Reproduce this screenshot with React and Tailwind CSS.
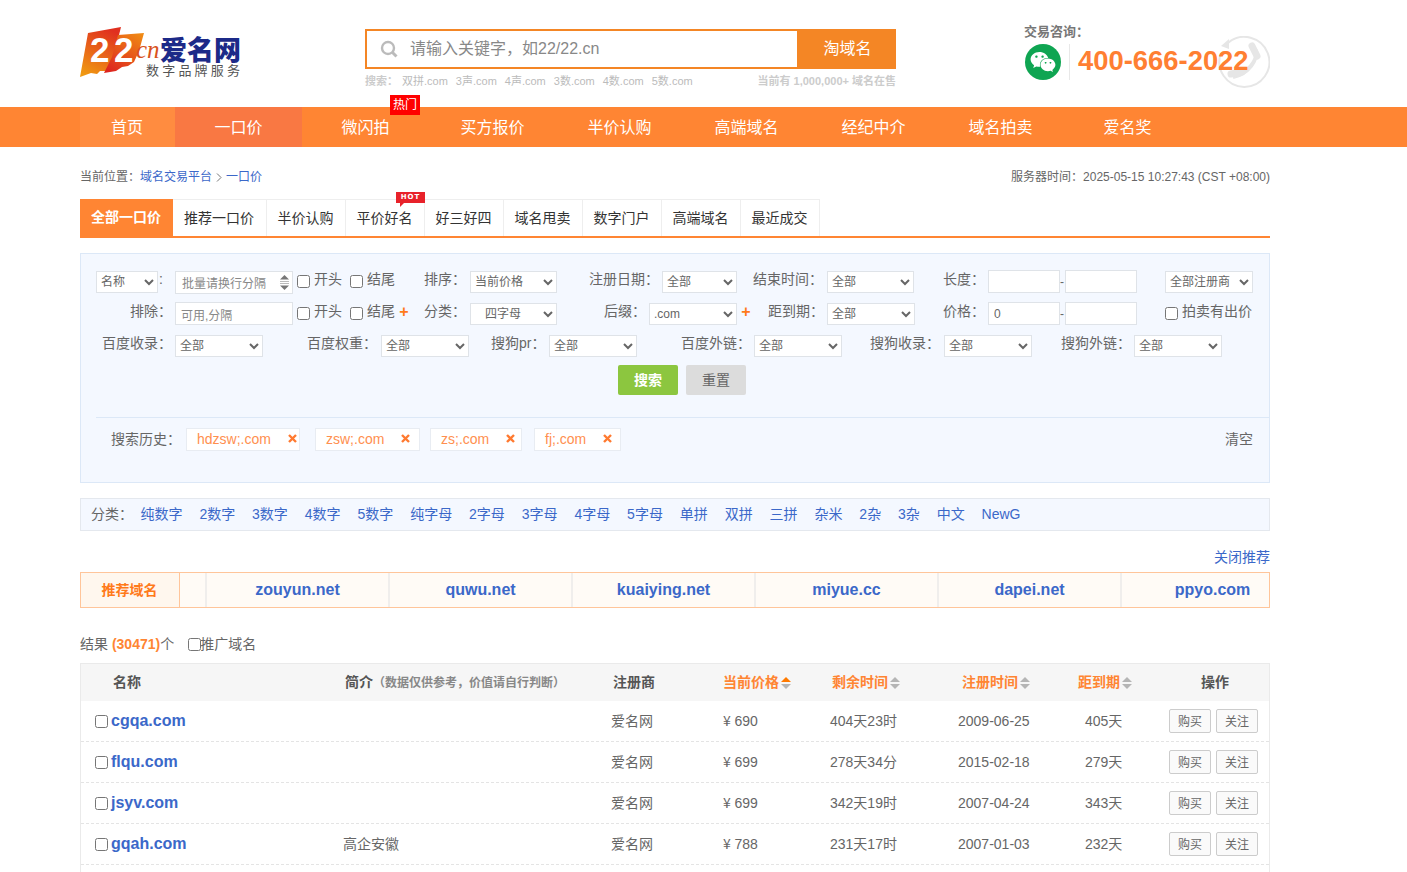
import React from "react";
import { FaWeixin } from "react-icons/fa";

const link = "text-[#3b68c9]";

function Logo() {
  return (
    <svg width="164" height="54" viewBox="0 0 164 54" className="block">
      <defs>
        <linearGradient id="g1" x1="0.2" y1="1" x2="0.6" y2="0">
          <stop offset="0" stopColor="#f09a12" />
          <stop offset="1" stopColor="#e0301f" />
        </linearGradient>
        <linearGradient id="g2" x1="0.2" y1="1" x2="0.9" y2="0">
          <stop offset="0" stopColor="#dd241f" />
          <stop offset="1" stopColor="#f08a14" />
        </linearGradient>
      </defs>
      <polygon points="0,50 8,6 41,0 38,12 32,38 27,44 20,44 17,47 11,46" fill="url(#g1)" />
      <polygon points="38,8 64,6 59,24 54,35 48,39 42,40 36,44 24,46 32,30" fill="url(#g2)" />
      <text x="10" y="35" fontSize="35" fontWeight="700" fill="#fff" fontFamily="'Liberation Sans',sans-serif">2</text>
      <text x="34" y="35" fontSize="35" fontWeight="700" fill="#fff" fontFamily="'Liberation Sans',sans-serif">2</text>
      <text x="56" y="31" fontSize="25" fontStyle="italic" fill="#d9531c" fontFamily="'Liberation Serif',serif">cn</text>
      <text x="80" y="33" fontSize="27" fontWeight="900" fill="#1c2a88" fontFamily="'Noto Sans CJK SC',sans-serif">爱名网</text>
      <text x="66" y="48" fontSize="13" letterSpacing="3.2" fill="#555" fontFamily="'Noto Sans CJK SC',sans-serif">数字品牌服务</text>
    </svg>
  );
}

function Sort({ active }) {
  return (
    <svg width="10" height="12" viewBox="0 0 10 12" className="ml-[2px] flex-none">
      <polygon points="5,0 10,5 0,5" fill={active ? "#ff7a00" : "#b5b5b5"} />
      <polygon points="0,7 10,7 5,12" fill="#b5b5b5" />
    </svg>
  );
}

function Sel({ cls, text }) {
  return (
    <select className={"flex-none h-[22px] bg-white border border-[#dfe3e8] text-[12px] text-[#666] " + cls}>
      <option>{text}</option>
    </select>
  );
}

function Lab({ cls, children }) {
  return <span className={"flex-none whitespace-nowrap mb-[5px] " + cls}>{children}</span>;
}

function Chk({ cls = "" }) {
  return <input type="checkbox" className={"flex-none w-[13px] h-[13px] bg-white " + cls} />;
}

function Inp({ cls, val, ph }) {
  return (
    <input
      defaultValue={val}
      placeholder={ph}
      className={"flex-none h-[23px] mb-[1px] bg-white border border-[#dfe3e8] text-[12px] text-[#666] px-[5px] placeholder:text-[#888] " + cls}
    />
  );
}

const Plus = ({ cls }) => <span className={"flex-none w-[10px] text-center font-bold text-[#ff7a1a] text-[16px] leading-none mb-[4px] " + cls}>+</span>;

const tabs = [
  ["推荐一口价", "w-[94px]"],
  ["半价认购", "w-[79px]"],
  ["平价好名", "w-[79px]"],
  ["好三好四", "w-[79px]"],
  ["域名甩卖", "w-[79px]"],
  ["数字门户", "w-[79px]"],
  ["高端域名", "w-[79px]"],
  ["最近成交", "w-[79px]"],
];

const cats = ["纯数字", "2数字", "3数字", "4数字", "5数字", "纯字母", "2字母", "3字母", "4字母", "5字母", "单拼", "双拼", "三拼", "杂米", "2杂", "3杂", "中文", "NewG"];
const rec = ["zouyun.net", "quwu.net", "kuaiying.net", "miyue.cc", "dapei.net", "ppyo.com"];
const rows = [
  ["cgqa.com", "", "690", "404天23时", "2009-06-25", "405天"],
  ["flqu.com", "", "699", "278天34分", "2015-02-18", "279天"],
  ["jsyv.com", "", "699", "342天19时", "2007-04-24", "343天"],
  ["gqah.com", "高企安徽", "788", "231天17时", "2007-01-03", "232天"],
];
const navs = ["微闪拍", "买方报价", "半价认购", "高端域名", "经纪中介", "域名拍卖", "爱名奖"];
const hints = ["双拼.com", "3声.com", "4声.com", "3数.com", "4数.com", "5数.com"];

function Tag({ text, cls }) {
  return (
    <span className={"flex-none h-[23px] flex items-center bg-white border border-[#e8ecf2] pl-[10px] text-[14px] text-[#ff8f4f] " + cls}>
      {text}
      <svg width="9" height="9" viewBox="0 0 9 9" className="ml-[17px] mb-[3px] flex-none">
        <path d="M1 1 L8 8 M8 1 L1 8" stroke="#ff7a30" strokeWidth="2.4" />
      </svg>
    </span>
  );
}

export default function App() {
  return (
    <div className="h-[872px] overflow-hidden bg-white text-[#666] text-[14px] font-['Liberation_Sans','Noto_Sans_CJK_SC',sans-serif]">
      {/* header */}
      <div className="h-[107px] pl-[80px] flex">
        <div className="w-[285px] flex-none pt-[27px]">
          <Logo />
        </div>
        <div className="w-[531px] flex-none pt-[29px]">
          <div className="h-[40px] flex border-2 border-[#f48625]">
            <div className="w-[43px] flex-none flex items-center justify-center">
              <svg width="18" height="18" viewBox="0 0 18 18">
                <circle cx="8" cy="8" r="6" fill="none" stroke="#bbb" strokeWidth="2.4" />
                <path d="M12.5 12.5 L16.5 16.5" stroke="#bbb" strokeWidth="3" />
              </svg>
            </div>
            <input placeholder="请输入关键字，如22/22.cn" className="flex-1 min-w-0 text-[16px] placeholder:text-[#888] outline-none" />
            <button className="w-[99px] pl-[2px] flex-none bg-[#f48625] text-white text-[16px] -my-[2px] -mr-[2px]">淘域名</button>
          </div>
          <div className="mt-[5px] flex text-[11px] text-[#ccc] font-bold leading-[14px]">
            <span className="w-[37px] flex-none">搜索：</span>
            <span className="flex gap-[8px]">
              {hints.map((h) => (
                <span key={h} className="font-normal text-[#bbb]">{h}</span>
              ))}
            </span>
            <span className="ml-auto">当前有 1,000,000+ 域名在售</span>
          </div>
        </div>
        <div className="relative ml-[128px] w-[246px] flex-none pt-[24px]">
          <svg width="52" height="52" viewBox="0 0 52 52" className="absolute left-[194px] top-[36px]">
            <path d="M10 7 A25 25 0 1 1 3 17" fill="none" stroke="#e6e6e6" strokeWidth="2" />
            <polygon points="3,10 11,3 11,13" fill="#e6e6e6" />
            <path d="M38 14 C40 24 30 38 15 41" fill="none" stroke="#e6e6e6" strokeWidth="4" />
            <path d="M34 10 L39 20" stroke="#e6e6e6" strokeWidth="7" strokeLinecap="round" />
            <path d="M13 38 L24 36" stroke="#e6e6e6" strokeWidth="7" strokeLinecap="round" />
          </svg>
          <div className="relative text-[13px] leading-[16px] font-bold text-[#777]">交易咨询：</div>
          <div className="relative mt-[4px] flex items-center">
            <span className="w-[36px] h-[36px] ml-[1px] rounded-full bg-[#0fa552] flex items-center justify-center text-white">
              <FaWeixin size={26} />
            </span>
            <span className="ml-[8px] w-px h-[36px] bg-[#e8e8e8]" />
            <span className="ml-[8px] text-[27.4px] leading-[34px] mb-[2px] font-bold text-[#ff7f32]">400-666-2022</span>
          </div>
        </div>
      </div>

      {/* nav */}
      <div className="h-[40px] bg-[#ff8533] pl-[80px] flex text-[16px] text-white">
        <div className="w-[95px] pt-[2px] pr-[1px] flex items-center justify-center bg-[#ff8c40]">首页</div>
        <div className="w-[127px] pt-[2px] flex items-center justify-center bg-[#f97843]">一口价</div>
        {navs.map((n, i) => (
          <div key={n} className="relative w-[127px] pt-[2px] flex items-center justify-center">
            {n}
            {i === 0 && (
              <span className="absolute left-[88px] -top-[12px] w-[30px] h-[20px] bg-[#ff0000] text-[12px] leading-[20px] text-center">热门</span>
            )}
          </div>
        ))}
      </div>

      <div className="ml-[80px] w-[1190px]">
        {/* breadcrumb */}
        <div className="h-[52px] pt-[22px] flex items-start justify-between text-[12px] leading-[16px]">
          <span className="flex items-center">
            当前位置：<span className={link}>域名交易平台</span>
            <svg width="6" height="9" viewBox="0 0 6 9" className="mx-[4px]">
              <path d="M1 0.5 L5 4.5 L1 8.5" fill="none" stroke="#777" strokeWidth="1" />
            </svg>
            <span className={link}>一口价</span>
          </span>
          <span>服务器时间：2025-05-15 10:27:43 (CST +08:00)</span>
        </div>

        {/* tabs */}
        <div className="h-[39px] flex border-b-2 border-[#ff8533] text-[14px] text-[#333]">
          <div className="w-[93px] pr-[1px] flex items-center justify-center bg-[#ff8533] text-white font-bold">全部一口价</div>
          {tabs.map(([t, w], i) => (
            <div key={t} className={"relative pr-[1px] flex items-center justify-center border-r border-t border-[#eee] " + w}>
              {t}
              {i === 2 && (
                <span className="absolute left-[50px] -top-[8px] w-[29px] h-[11px] bg-[#e8222a] text-white text-[7px] font-bold leading-[11px] text-center tracking-[1px] font-['DejaVu_Sans',sans-serif]">
                  HOT
                  <span className="absolute left-[4px] top-[11px] w-0 h-0 border-t-[4px] border-t-[#e8222a] border-r-[4px] border-r-transparent" />
                </span>
              )}
            </div>
          ))}
        </div>

        {/* filter panel */}
        <div className="mt-[15px] h-[230px] bg-[#f4f8ff] border border-[#dce8f7] pt-[12px] pl-[15px]">
          <div className="h-[32px] flex items-center">
            <Sel cls="w-[62px]" text="名称" />
            <Lab cls="w-[17px] pl-[1px]">:</Lab>
            <div className="relative flex-none w-[118px] h-[23px]">
              <textarea rows={1} placeholder="批量请换行分隔" className="block w-full h-full bg-white border border-[#dfe3e8] text-[12px] leading-[18px] pl-[6px] pt-[3px] resize-none overflow-hidden placeholder:text-[#888]" />
              <svg width="9" height="15" viewBox="0 0 9 15" className="absolute left-[105px] top-[4px]">
                <polygon points="4.5,0 9,4.5 0,4.5" fill="#777" />
                <rect x="0" y="6" width="9" height="1" fill="#bbb" />
                <rect x="0" y="8" width="9" height="1" fill="#bbb" />
                <polygon points="0,10.5 9,10.5 4.5,15" fill="#777" />
              </svg>
            </div>
            <Chk cls="ml-[4px] mb-[2px]" />
            <Lab cls="ml-[4px]">开头</Lab>
            <Chk cls="ml-[8px] mb-[2px]" />
            <Lab cls="ml-[4px]">结尾</Lab>
            <Lab cls="ml-[29px]">排序：</Lab>
            <Sel cls="ml-[4px] w-[87px]" text="当前价格" />
            <Lab cls="ml-[32px]">注册日期：</Lab>
            <Sel cls="ml-[3px] w-[75px]" text="全部" />
            <Lab cls="ml-[16px]">结束时间：</Lab>
            <Sel cls="ml-[4px] w-[87px]" text="全部" />
            <Lab cls="ml-[29px]">长度：</Lab>
            <Inp cls="ml-[3px] w-[72px]" />
            <span className="w-[5px] flex-none text-[12px]">-</span>
            <Inp cls="w-[72px]" />
            <Sel cls="ml-[28px] w-[88px]" text="全部注册商" />
          </div>
          <div className="h-[32px] flex items-center">
            <Lab cls="ml-[34px]">排除：</Lab>
            <Inp cls="ml-[3px] w-[118px] pt-[4px]" ph="可用,分隔" />
            <Chk cls="ml-[4px] mb-[2px]" />
            <Lab cls="ml-[4px]">开头</Lab>
            <Chk cls="ml-[8px] mb-[2px]" />
            <Lab cls="ml-[4px]">结尾</Lab>
            <Plus cls="ml-[4px]" />
            <Lab cls="ml-[15px]">分类：</Lab>
            <Sel cls="ml-[4px] w-[87px] pl-[10px]" text="四字母" />
            <Lab cls="ml-[47px]">后缀：</Lab>
            <Sel cls="ml-[3px] w-[88px]" text=".com" />
            <Plus cls="ml-[4px]" />
            <Lab cls="ml-[17px]">距到期：</Lab>
            <Sel cls="ml-[3px] w-[88px]" text="全部" />
            <Lab cls="ml-[28px]">价格：</Lab>
            <Inp cls="ml-[3px] w-[72px]" val="0" />
            <span className="w-[5px] flex-none text-[12px]">-</span>
            <Inp cls="w-[72px]" />
            <Chk cls="ml-[28px] mb-[1px]" />
            <Lab cls="ml-[4px]">拍卖有出价</Lab>
          </div>
          <div className="h-[32px] flex items-center">
            <Lab cls="ml-[6px]">百度收录：</Lab>
            <Sel cls="ml-[3px] w-[88px]" text="全部" />
            <Lab cls="ml-[44px]">百度权重：</Lab>
            <Sel cls="ml-[4px] w-[88px]" text="全部" />
            <Lab cls="ml-[22px] w-[58px]">搜狗pr：</Lab>
            <Sel cls="w-[88px]" text="全部" />
            <Lab cls="ml-[44px]">百度外链：</Lab>
            <Sel cls="ml-[3px] w-[88px]" text="全部" />
            <Lab cls="ml-[28px]">搜狗收录：</Lab>
            <Sel cls="ml-[4px] w-[88px]" text="全部" />
            <Lab cls="ml-[29px]">搜狗外链：</Lab>
            <Sel cls="ml-[3px] w-[88px]" text="全部" />
          </div>
          <div className="mt-[3px] h-[30px] flex pl-[522px] gap-[8px] text-[14px]">
            <button className="w-[60px] rounded-[2px] bg-[#8cc63f] text-white font-bold">搜索</button>
            <button className="w-[60px] rounded-[2px] bg-[#dcdcdc] text-[#666]">重置</button>
          </div>
          <div className="mt-[22px] border-t border-[#dce8f7] pt-[10px] flex items-start">
            <span className="ml-[15px] flex-none leading-[22px]">搜索历史：</span>
            <Tag text="hdzsw;.com" cls="ml-[5px] w-[114px]" />
            <Tag text="zsw;.com" cls="ml-[15px] w-[105px]" />
            <Tag text="zs;.com" cls="ml-[10px] w-[92px]" />
            <Tag text="fj;.com" cls="ml-[12px] w-[87px]" />
            <span className="ml-auto mr-[16px] leading-[22px]">清空</span>
          </div>
        </div>

        {/* categories */}
        <div className="mt-[15px] h-[33px] bg-[#f4f8ff] border border-[#e4e8ee] flex items-center pl-[10px]">
          <span className="flex-none mr-[7.5px]">分类：</span>
          <div className="flex gap-[16.9px]">
            {cats.map((c) => (
              <span key={c} className={link}>{c}</span>
            ))}
          </div>
        </div>

        <div className={"mt-[17px] h-[18px] leading-[18px] text-right " + link}>关闭推荐</div>

        {/* recommended */}
        <div className="mt-[6px] h-[36px] border border-[#ffc59a] bg-[#fffbf6] flex overflow-hidden text-[16px] font-bold">
          <div className="w-[99px] pr-[1px] flex-none bg-[#fff7ee] border-r border-[#ffc59a] flex items-center justify-center text-[14px] text-[#ff7a1a]">推荐域名</div>
          <div className="w-[25px] flex-none" />
          {rec.map((r) => (
            <div key={r} className={"w-[183px] flex-none border-l-2 border-[#f0eeec] flex items-center justify-center " + link}>
              {r}
            </div>
          ))}
        </div>

        {/* result line */}
        <div className="mt-[27px] h-[18px] leading-[18px] flex items-center">
          结果&nbsp;<span className="font-bold text-[#ff8533]">(30471)</span>个
          <Chk cls="ml-[14px]" />
          <span className="-ml-[1px]">推广域名</span>
        </div>

        {/* table */}
        <div className="mt-[10px] border-x border-t border-[#eaeaea]">
          <div className="h-[37px] bg-[#f6f6f6] flex items-center font-bold text-[#555]">
            <span className="w-[264px] flex-none pl-[32px]">名称</span>
            <span className="w-[268px] flex-none whitespace-nowrap">
              简介<span className="text-[12px] text-[#888]">（数据仅供参考，价值请自行判断）</span>
            </span>
            <span className="w-[110px] flex-none">注册商</span>
            <span className="w-[109px] flex-none flex items-center text-[#ff8533]">当前价格<Sort active /></span>
            <span className="w-[130px] flex-none flex items-center text-[#ff8533]">剩余时间<Sort /></span>
            <span className="w-[116px] flex-none flex items-center text-[#ff8533]">注册时间<Sort /></span>
            <span className="w-[123px] flex-none flex items-center text-[#ff8533]">距到期<Sort /></span>
            <span>操作</span>
          </div>
          {rows.map((r) => (
            <div key={r[0]} className="h-[41px] border-b border-dashed border-[#e4e4e4] flex items-center">
              <span className="w-[262px] flex-none pl-[14px] flex items-center">
                <Chk />
                <span className={"ml-[3px] text-[16px] font-bold " + link}>{r[0]}</span>
              </span>
              <span className="w-[268px] flex-none">{r[1]}</span>
              <span className="w-[112px] flex-none">爱名网</span>
              <span className="w-[107px] flex-none">
                <span className="inline-block w-[11.5px] font-['Noto_Sans_CJK_SC',sans-serif]">¥</span>
                {r[2]}
              </span>
              <span className="w-[128px] flex-none">{r[3]}</span>
              <span className="w-[127px] flex-none">{r[4]}</span>
              <span className="w-[84px] flex-none">{r[5]}</span>
              <span className="flex gap-[5px]">
                <button className="w-[42px] h-[24px] pt-[1px] bg-[#fafafa] border border-[#ccc] rounded-[2px] text-[12px]">购买</button>
                <button className="w-[42px] h-[24px] pt-[1px] bg-[#fafafa] border border-[#ccc] rounded-[2px] text-[12px]">关注</button>
              </span>
            </div>
          ))}
          <div className="h-[41px]" />
        </div>
      </div>
    </div>
  );
}
